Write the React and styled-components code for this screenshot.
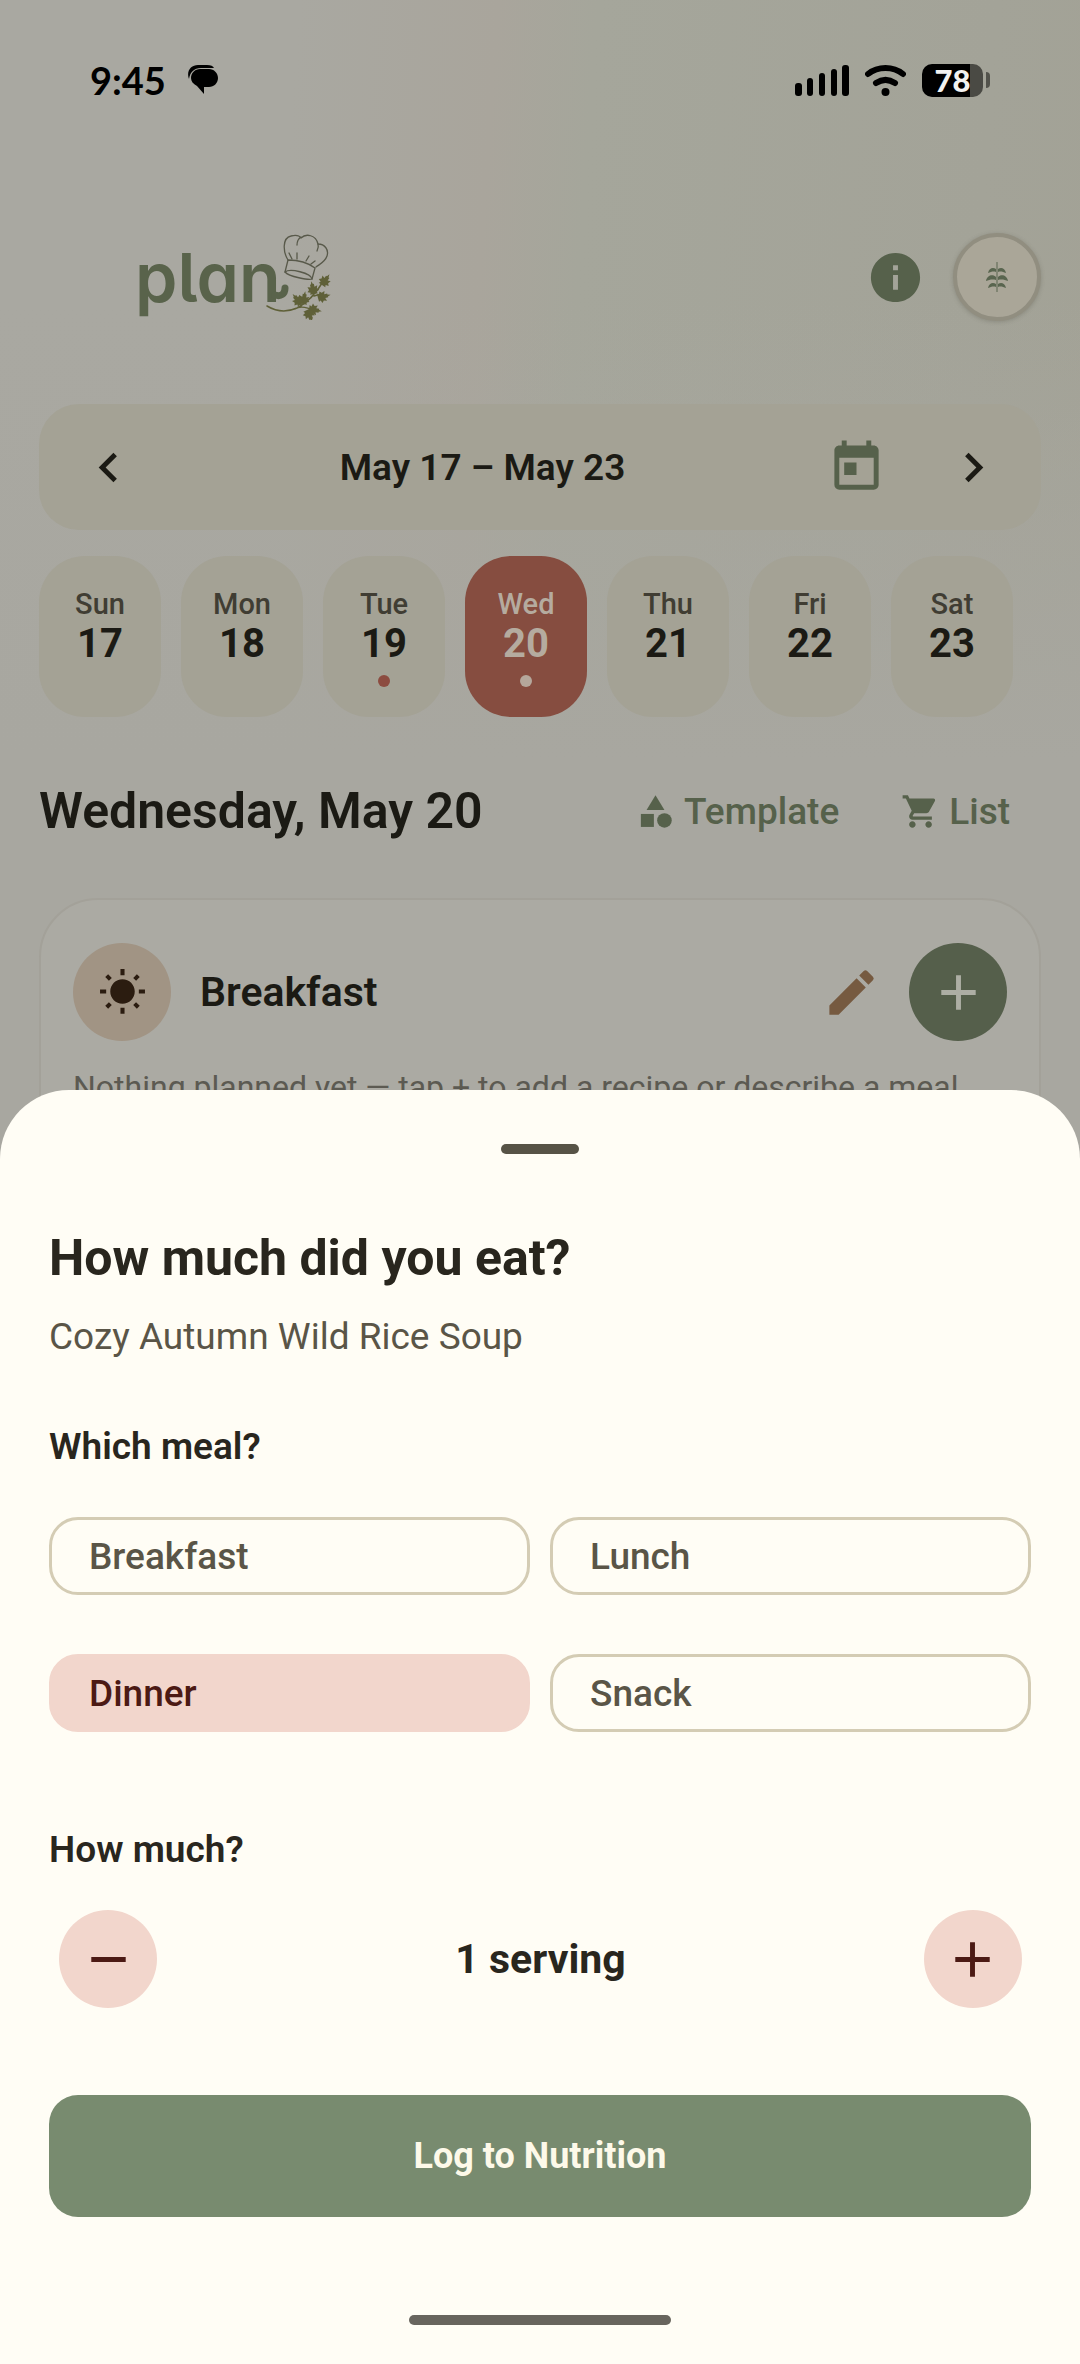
import React, {useState} from 'react';
import styled, {createGlobalStyle} from 'styled-components';
import {
  MdAdd,
  MdCategory,
  MdChevronLeft,
  MdChevronRight,
  MdEdit,
  MdInfo,
  MdRemove,
  MdShoppingCart,
  MdToday,
  MdWbSunny,
} from 'react-icons/md';

const ink = '#1b1a14';
const sheetInk = '#29261e';
const mutedInk = '#5a5547';
const dimGreen = '#56614b';
const dimCream = '#a4a295';
const blush = '#f2d6cc';
const maroon = '#4c1a14';

const GlobalStyle = createGlobalStyle`
  * {
    box-sizing: border-box;
  }
  body {
    margin: 0;
    font-family: Roboto, 'Liberation Sans', sans-serif;
    color: ${ink};
  }
  h1, h2, h3, p {
    margin: 0;
  }
  button {
    padding: 0;
    border: none;
    background: none;
    font: inherit;
    color: inherit;
    cursor: pointer;
  }
`;

const Screen = styled.div`
  height: 100vh;
  overflow: hidden;
  background: linear-gradient(180deg, rgba(169, 168, 161, 0) 300px, #a8a7a0 760px),
    linear-gradient(
      94deg,
      #a9a8a1 0%,
      #a9a8a1 24%,
      #a9a59c 40%,
      #a5a69b 48%,
      #a3a398 80%,
      #a2a194 100%
    );
`;

const StatusBar = styled.div`
  display: flex;
  align-items: center;
  justify-content: space-between;
  height: 160px;
  padding: 0 90px;
`;
const StatusGroup = styled.div`
  display: flex;
  align-items: center;
  gap: 16px;
`;
const Clock = styled.span`
  margin-right: 6px;
  font-family: Lato, sans-serif;
  font-size: 38px;
  font-weight: 700;
  line-height: 44px;
  color: #000;
`;
const Battery = styled.span`
  display: flex;
  align-items: center;
  gap: 3px;
  &::after {
    content: '';
    width: 4px;
    height: 16px;
    border-radius: 0 4px 4px 0;
    background: #52524b;
  }
`;
const BatteryLevel = styled.span`
  width: 61px;
  border-radius: 10px;
  background: linear-gradient(90deg, #000 78%, #4a4a44 78%);
  font-family: Lato, sans-serif;
  font-size: 31px;
  font-weight: 900;
  line-height: 33px;
  text-align: center;
  color: #f2f2f0;
`;

const Planner = styled.main`
  padding: 0 39px;
`;
const Header = styled.header`
  display: flex;
  align-items: center;
  justify-content: space-between;
  height: 234px;
  padding-left: 96px;
`;
const Brand = styled.div`
  display: flex;
  align-items: center;
`;
const BrandName = styled.span`
  margin-right: -15px;
  font-family: Inter, sans-serif;
  font-size: 68px;
  font-weight: 600;
  font-feature-settings: 'cv11', 'cv05';
  line-height: 96px;
  color: #59634b;
`;
const HeaderActions = styled.div`
  display: flex;
  align-items: center;
  gap: 28px;
  color: ${dimGreen};
`;
const IconButton = styled.button`
  display: flex;
  align-items: center;
  justify-content: center;
  color: ${(props) => props.$color || 'inherit'};
`;
const Avatar = styled(IconButton)`
  width: 88px;
  height: 88px;
  border: 4px solid #918e80;
  border-radius: 50%;
  background: #aaa698;
  box-shadow: 0 1px 4px rgba(80, 78, 66, 0.3);
`;

const WeekBar = styled.section`
  display: flex;
  align-items: center;
  height: 126px;
  margin-top: 10px;
  padding: 0 38px 0 40px;
  border-radius: 40px;
  background: ${dimCream};
`;
const WeekRange = styled.h2`
  flex: 1;
  font-size: 37px;
  font-weight: 600;
  text-align: center;
`;
const WeekActions = styled.div`
  display: flex;
  gap: 58px;
`;

const Days = styled.div`
  display: flex;
  gap: 20px;
  margin: 26px 28px 0 0;
`;
const Day = styled.button`
  display: flex;
  flex: 1;
  flex-direction: column;
  align-items: center;
  height: 161px;
  padding-top: 28px;
  border-radius: 46px;
  background: ${(props) => (props.$selected ? '#864d40' : dimCream)};
  color: ${(props) => (props.$selected ? '#b5ab9f' : ink)};
`;
const DayName = styled.span`
  font-size: 29px;
  font-weight: 500;
  line-height: 40px;
  color: ${(props) => (props.$selected ? 'inherit' : '#403d33')};
`;
const DayNumber = styled.span`
  font-size: 40px;
  font-weight: 700;
  line-height: 40px;
`;
const Dot = styled.span`
  width: 12px;
  height: 12px;
  margin-top: 11px;
  border-radius: 50%;
  background: ${(props) => (props.$selected ? '#b5a79b' : '#8c4c40')};
`;

const DayHeader = styled.div`
  display: flex;
  align-items: center;
  justify-content: space-between;
  height: 181px;
  padding-top: 7px;
`;
const DayTitle = styled.h1`
  font-size: 50px;
  font-weight: 600;
`;
const TextButton = styled.button`
  display: flex;
  align-items: center;
  gap: 9px;
  padding: 0 31px;
  font-size: 37px;
  font-weight: 500;
  color: ${dimGreen};
`;
const Row = styled.div`
  display: flex;
  align-items: center;
  gap: ${(props) => props.$gap || 0}px;
`;

const MealCard = styled.section`
  height: 600px;
  padding: 43px 32px;
  border: 2px solid #a3a199;
  border-radius: 59px;
  background: #abaaa3;
`;
const MealTitle = styled.h3`
  flex: 1;
  padding-left: 29px;
  font-size: 41px;
  font-weight: 600;
`;
const Round = styled.span`
  display: flex;
  align-items: center;
  justify-content: center;
  width: 98px;
  height: 98px;
  border-radius: 50%;
  background: ${(props) => props.$fill};
  color: ${(props) => props.$color};
`;
const EmptyNote = styled.p`
  margin-top: 22px;
  font-size: 32px;
  line-height: 48px;
  white-space: nowrap;
  color: #5c5a52;
`;

const Sheet = styled.section`
  position: fixed;
  right: 0;
  bottom: 0;
  left: 0;
  display: flex;
  flex-direction: column;
  padding: 54px 49px 39px;
  border-radius: 69px 69px 0 0;
  background: #fffdf5;
  color: ${sheetInk};
`;
const Handle = styled.span`
  align-self: center;
  width: ${(props) => props.$width}px;
  height: 10px;
  border-radius: 5px;
  background: ${(props) => props.$color};
`;
const SheetTitle = styled.h2`
  margin-top: 74px;
  font-size: 50px;
  font-weight: 700;
  line-height: 60px;
`;
const RecipeName = styled.p`
  margin-top: 25px;
  font-size: 37px;
  line-height: 48px;
  color: ${mutedInk};
`;
const FieldTitle = styled.h3`
  margin-top: ${(props) => props.$top}px;
  font-size: 37px;
  font-weight: 600;
  line-height: 48px;
`;
const MealGrid = styled.div`
  display: grid;
  grid-template-columns: 1fr 1fr;
  gap: 59px 20px;
  margin-top: 46px;
`;
const MealChip = styled.button`
  height: 78px;
  padding: 0 37px;
  border: 3px solid ${(props) => (props.$selected ? blush : '#d4ccb4')};
  border-radius: 29px;
  background: ${(props) => (props.$selected ? blush : 'transparent')};
  font-size: 37px;
  font-weight: 500;
  text-align: left;
  color: ${(props) => (props.$selected ? maroon : mutedInk)};
`;
const Stepper = styled.div`
  display: flex;
  align-items: center;
  justify-content: space-between;
  margin-top: 36px;
  padding: 0 9px 0 10px;
  font-size: 41px;
  font-weight: 700;
`;
const LogButton = styled.button`
  height: 122px;
  margin: 87px 0 98px;
  border-radius: 29px;
  background: #788b6f;
  font-size: 36px;
  font-weight: 700;
  color: #fdf9e9;
`;

const days = [
  {name: 'Sun', number: 17},
  {name: 'Mon', number: 18},
  {name: 'Tue', number: 19, planned: true},
  {name: 'Wed', number: 20, planned: true},
  {name: 'Thu', number: 21},
  {name: 'Fri', number: 22},
  {name: 'Sat', number: 23},
];
const meals = ['Breakfast', 'Lunch', 'Dinner', 'Snack'];

const ChatIcon = () => (
  <svg width="30" height="30" viewBox="0 0 30 30">
    <path d="M1 14C-2 6 3 0 10 0h9c4 0 6 1 7 3H13C6 3 2 7 1 14z" />
    <path d="M12 4h9c5 0 9 4 9 9s-4 9-9 9h-5v7l-7-8c-4-2-6-5-6-8 0-5 4-9 9-9z" />
  </svg>
);

const SignalIcon = () => (
  <svg width="54" height="31" viewBox="0 0 54 31">
    <rect x="0" y="18" width="7" height="13" rx="3" />
    <rect x="12" y="13" width="6" height="18" rx="3" />
    <rect x="24" y="8" width="6" height="23" rx="3" />
    <rect x="36" y="4" width="6" height="27" rx="3" />
    <rect x="47" y="0" width="7" height="31" rx="3" />
  </svg>
);

const WifiIcon = () => (
  <svg
    width="41"
    height="31"
    viewBox="0 0 41 31"
    fill="none"
    stroke="#000"
    strokeWidth="6"
    strokeLinecap="round"
  >
    <path d="M3 9C13 1 28 1 38 9" />
    <path d="M11 18c6-4 13-4 19 0" />
    <circle cx="20.500" cy="27" r="4" fill="#000" stroke="none" />
  </svg>
);

const Leaf = ({x, y, turn}) => (
  <path
    transform={`translate(${x} ${y}) rotate(${turn})`}
    d="M0 0L-4 0-3-2-6-3-4-5-5-8-2-7-2-10-1-10 0-13 1-10 2-10 2-7 5-8 4-5 6-3 3-2 4 0z"
    fill="#5f6038"
  />
);

// chef hat over a parsley sprig, tucked behind the end of the brand name
const HatAndHerbs = () => (
  <svg width="66" height="86" viewBox="264 234 66 86" fill="none">
    <g
      stroke="#58594a"
      strokeWidth="1.300"
      strokeLinecap="round"
      strokeLinejoin="round"
    >
      <path d="M286 260c-5-8-6-22 3-24 4-1 8-1 10 2 5-5 15-3 17 6 7 0 11 6 9 12-2 6-7 8-11 11" />
      <path d="M295 245c0-4 1-6 4-8M316 244c1 3 0 5-1 7" />
      <path d="M286 260c10 0 19 2 27 8l-3 11c-3 1-23-2-27-7z" />
      <path d="M283 272c5-4 26 1 27 7M290 259l-3-6M295 259v-6M304 261l3-5M309 264l4-3" />
    </g>
    <path
      d="M265 306c10 6 21 6 30 2 12-6 20-16 27-28M293 309c6-4 14-1 20 2M299 306l-1-9M312 296l7-2"
      stroke="#5f6038"
      strokeWidth="1.500"
      strokeLinecap="round"
    />
    <Leaf x={320} y={285} turn={35} />
    <Leaf x={312} y={294} turn={-12} />
    <Leaf x={316} y={298} turn={75} />
    <Leaf x={301} y={304} turn={10} />
    <Leaf x={299} y={304} turn={-40} />
    <Leaf x={307} y={309} turn={100} />
    <Leaf x={305} y={310} turn={155} />
    <path
      d="M273 295c6 2 10-1 10-7"
      stroke="#59634b"
      strokeWidth="7"
      strokeLinecap="round"
    />
  </svg>
);

const SproutIcon = () => (
  <svg width="22" height="30" viewBox="0 0 22 30" fill="#59654f">
    <path d="M10.500 0h1v30h-1z" />
    <path d="M10 10c-3-1-5 0-8 1 1-5 5-6 8-4zM12 10c3-1 5 0 8 1-1-5-5-6-8-4z" />
    <path d="M10 18c-4-1-7 0-10 1 1-6 7-7 10-4zM12 18c4-1 7 0 10 1-1-6-7-7-10-4z" />
    <path d="M10 25c-3-1-5 0-8 1 1-5 5-6 8-4zM12 25c3-1 5 0 8 1-1-5-5-6-8-4z" />
  </svg>
);

const LogSheet = () => {
  const [meal, setMeal] = useState('Dinner');
  const [servings, setServings] = useState(1);

  return (
    <Sheet role="dialog" aria-label="Log a meal">
      <Handle $width={78} $color="#575346" />
      <SheetTitle>How much did you eat?</SheetTitle>
      <RecipeName>Cozy Autumn Wild Rice Soup</RecipeName>
      <FieldTitle $top={62}>Which meal?</FieldTitle>
      <MealGrid>
        {meals.map((name) => (
          <MealChip
            key={name}
            aria-pressed={name === meal}
            $selected={name === meal}
            onClick={() => setMeal(name)}
          >
            {name}
          </MealChip>
        ))}
      </MealGrid>
      <FieldTitle $top={94}>How much?</FieldTitle>
      <Stepper>
        <Round
          as="button"
          aria-label="Less"
          $fill={blush}
          $color={maroon}
          onClick={() => setServings(Math.max(1, servings - 1))}
        >
          <MdRemove size={59} />
        </Round>
        <span>
          {servings} {servings === 1 ? 'serving' : 'servings'}
        </span>
        <Round
          as="button"
          aria-label="More"
          $fill={blush}
          $color={maroon}
          onClick={() => setServings(servings + 1)}
        >
          <MdAdd size={59} />
        </Round>
      </Stepper>
      <LogButton>Log to Nutrition</LogButton>
      <Handle $width={262} $color="#68655e" />
    </Sheet>
  );
};

const App = () => {
  const [selected, setSelected] = useState(20);

  return (
    <Screen>
      <GlobalStyle />
      <StatusBar>
        <StatusGroup>
          <Clock>9:45</Clock>
          <ChatIcon />
        </StatusGroup>
        <StatusGroup>
          <SignalIcon />
          <WifiIcon />
          <Battery>
            <BatteryLevel>78</BatteryLevel>
          </Battery>
        </StatusGroup>
      </StatusBar>
      <Planner>
        <Header>
          <Brand>
            <BrandName>plan</BrandName>
            <HatAndHerbs />
          </Brand>
          <HeaderActions>
            <IconButton aria-label="Info">
              <MdInfo size={59} />
            </IconButton>
            <Avatar aria-label="Profile">
              <SproutIcon />
            </Avatar>
          </HeaderActions>
        </Header>
        <WeekBar>
          <IconButton aria-label="Previous week">
            <MdChevronLeft size={59} />
          </IconButton>
          <WeekRange>May 17 – May 23</WeekRange>
          <WeekActions>
            <IconButton aria-label="Today" $color={dimGreen}>
              <MdToday size={59} />
            </IconButton>
            <IconButton aria-label="Next week">
              <MdChevronRight size={59} />
            </IconButton>
          </WeekActions>
        </WeekBar>
        <Days>
          {days.map(({name, number, planned}) => (
            <Day
              key={number}
              $selected={number === selected}
              onClick={() => setSelected(number)}
            >
              <DayName $selected={number === selected}>{name}</DayName>
              <DayNumber>{number}</DayNumber>
              {planned && <Dot $selected={number === selected} />}
            </Day>
          ))}
        </Days>
        <DayHeader>
          <DayTitle>Wednesday, May 20</DayTitle>
          <Row>
            <TextButton>
              <MdCategory size={39} />
              Template
            </TextButton>
            <TextButton>
              <MdShoppingCart size={39} />
              List
            </TextButton>
          </Row>
        </DayHeader>
        <MealCard>
          <Row>
            <Round $fill="#a19484" $color="#2b1c10">
              <MdWbSunny size={49} />
            </Round>
            <MealTitle>Breakfast</MealTitle>
            <Row $gap={28}>
              <IconButton aria-label="Edit breakfast" $color="#765a40">
                <MdEdit size={59} />
              </IconButton>
              <Round
                as="button"
                aria-label="Add to breakfast"
                $fill="#555f4b"
                $color="#adaea4"
              >
                <MdAdd size={59} />
              </Round>
            </Row>
          </Row>
          <EmptyNote>
            Nothing planned yet — tap + to add a recipe or describe a meal.
          </EmptyNote>
        </MealCard>
      </Planner>
      <LogSheet />
    </Screen>
  );
};

export default App;
